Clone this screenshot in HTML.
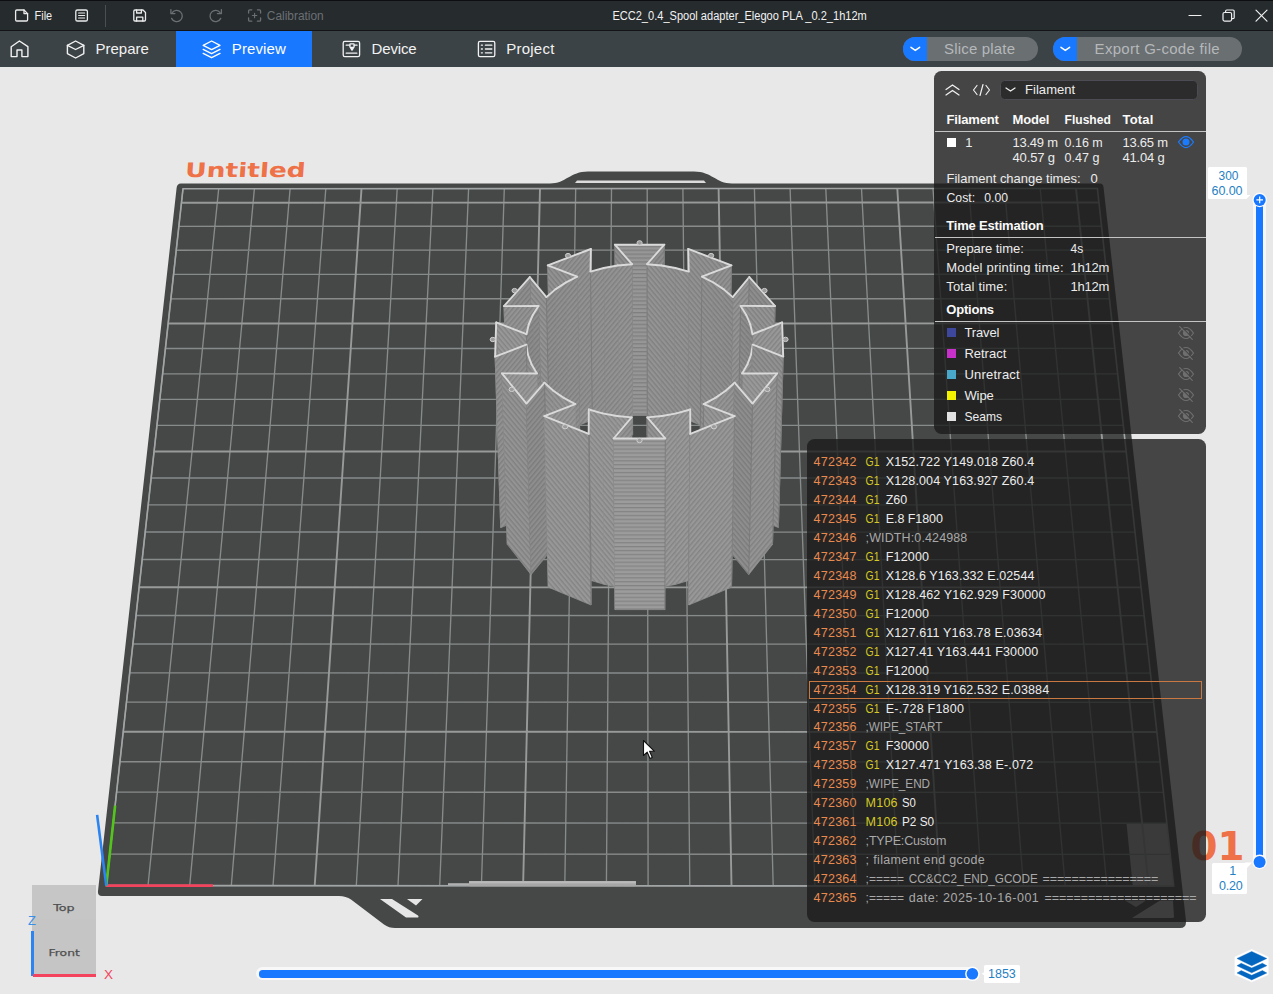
<!DOCTYPE html>
<html lang="en"><head><meta charset="utf-8"><title>ECC2_0.4_Spool adapter_Elegoo PLA _0.2_1h12m</title>
<style>
*{box-sizing:border-box;margin:0;padding:0}
html,body{width:1273px;height:994px;overflow:hidden;background:#e8e8e8;font-family:"Liberation Sans", "DejaVu Sans", sans-serif;}
#app{position:relative;width:1273px;height:994px;overflow:hidden;background:#e8e8e8}
.abs{position:absolute}
#titlebar{position:absolute;left:0;top:0;width:1273px;height:31px;background:#262b2e}
#tabbar{position:absolute;left:0;top:31px;width:1273px;height:36px;background:#3c4346}
#scene{position:absolute;left:0;top:0}
.panel{position:absolute;background:rgba(27,27,27,0.80);border-radius:7.5px}
.sep{position:absolute;width:271px;height:1px;background:#c4c4c4}
</style></head><body><div id="app">
<svg id="scene" width="1273" height="994" viewBox="0 0 1273 994">
<path d="M181,183.5 L550,183.5 C566,183.5 570,171.5 588,171.5 L694,171.5 C712,171.5 716,183.5 732,183.5 L1100,183.5 Q1103,183.5 1103.5,187 L1186,921 Q1186.5,928 1180,928 L395,928 Q389,928 384,924.5 L351,899.5 Q346,896 339,896 L102,896 Q97.5,896 98,891 L176.6,188 Q177,183.5 181,183.5 Z" fill="#464848"/>
<path d="M577,180.5 L704,180.5 L706,183 L575,183 Z" fill="#dcdcdc"/>
<polygon points="1132.8,885.9 1173.7,886 1166.8,823.2 1126.5,823.2" fill="#b4b4b4"/>
<path d="M106.3,885.6 L183,188.7 M106.3,885.6 L1173.7,886 M148,885.6 L218.7,188.6 M109.8,854 L1170.2,854.4 M189.7,885.6 L254.4,188.6 M113.2,822.9 L1166.8,823.2 M231.3,885.6 L290.1,188.6 M116.6,792.1 L1163.5,792.4 M273,885.7 L325.8,188.6 M120,761.7 L1160.1,762 M356.3,885.7 L397.2,188.6 M126.5,702.1 L1153.6,702.3 M398,885.7 L432.9,188.6 M129.7,672.9 L1150.4,673.1 M439.7,885.7 L468.6,188.6 M132.9,644 L1147.3,644.2 M481.4,885.7 L504.3,188.6 M136,615.5 L1144.1,615.6 M564.8,885.7 L575.7,188.6 M142.2,559.5 L1138,559.6 M606.4,885.8 L611.5,188.6 M145.2,532 L1135,532.1 M648.1,885.8 L647.2,188.6 M148.2,504.8 L1132,504.9 M689.8,885.8 L682.9,188.6 M151.1,478 L1129.1,478 M773.2,885.8 L754.4,188.6 M156.9,425.3 L1123.3,425.3 M814.9,885.8 L790.1,188.5 M159.8,399.4 L1120.5,399.4 M856.6,885.8 L825.8,188.5 M162.6,373.8 L1117.7,373.8 M898.4,885.9 L861.5,188.5 M165.4,348.5 L1114.9,348.4 M981.8,885.9 L933,188.5 M170.9,298.8 L1109.5,298.7 M1023.5,885.9 L968.8,188.5 M173.5,274.4 L1106.8,274.2 M1065.2,885.9 L1004.5,188.5 M176.2,250.2 L1104.2,250.1 M1106.9,885.9 L1040.2,188.5 M178.8,226.3 L1101.5,226.2" stroke="#878b8a" stroke-width="1.35" fill="none"/>
<path d="M314.7,885.7 L361.5,188.6 M123.2,731.7 L1156.9,732 M523.1,885.7 L540,188.6 M139.1,587.3 L1141.1,587.4 M731.5,885.8 L718.6,188.6 M154.1,451.5 L1126.2,451.5 M940.1,885.9 L897.3,188.5 M168.1,323.5 L1112.2,323.4 M1148.7,885.9 L1076,188.5 M181.4,202.7 L1099,202.5" stroke="#979a99" stroke-width="1.9" fill="none"/>
<path d="M106.3,885.6 L1173.7,886 L1097.4,188.5 L183,188.7 Z" stroke="#a2a5a5" stroke-width="1.6" fill="none"/>
<path d="M380,899 L392,899 L418,915.5 Q419.5,917.5 417,917.5 L406,917.5 Z" fill="#e6e6e6"/><path d="M407,899 L422.5,899 L416,905.5 Z" fill="#e6e6e6"/>
<path d="M1132,918 L1160,900.5 L1173,900.5 L1174,917 Q1174,918 1172,918 Z" fill="#c4c4c4"/><path d="M1125,900.5 L1146,900.5 L1136,907 Z" fill="#b5b5b5"/>
<rect x="448" y="883.2" width="22" height="2" fill="#b0b0b0"/><rect x="469" y="880.9" width="167" height="5.4" rx="1" fill="#a6a6a6"/><rect x="469" y="881.2" width="167" height="2.2" fill="#b9b9b9"/>
<line x1="106.3" y1="885.6" x2="213.0" y2="885.6" stroke="#f4435c" stroke-width="2.6"/>
<line x1="106.3" y1="885.6" x2="115.1" y2="805.6" stroke="#52c41a" stroke-width="2.6"/>
<line x1="106.3" y1="885.6" x2="97.1" y2="814.8" stroke="#2b84f0" stroke-width="2.6"/>
<defs><pattern id="pH" width="4" height="3.9" patternUnits="userSpaceOnUse"><rect width="4" height="3.9" fill="#fff" fill-opacity=".07"/><rect y="0" width="4" height="1.3" fill="#000" fill-opacity=".16"/></pattern><pattern id="pA" width="4" height="3.6" patternUnits="userSpaceOnUse" patternTransform="rotate(50)"><rect width="4" height="3.6" fill="#fff" fill-opacity=".05"/><rect width="4" height="1.4" fill="#000" fill-opacity=".13"/></pattern><pattern id="pB" width="4" height="3.6" patternUnits="userSpaceOnUse" patternTransform="rotate(-50)"><rect width="4" height="3.6" fill="#fff" fill-opacity=".05"/><rect width="4" height="1.4" fill="#000" fill-opacity=".13"/></pattern></defs>
<g stroke-linejoin="round">
<polygon points="614.9,244.7 664.3,244.7 663.8,415.4 616.2,415.4" fill="#8f8f8f" stroke="#8f8f8f" stroke-width="0.7"/>
<polygon points="614.9,244.7 664.3,244.7 663.8,415.4 616.2,415.4" fill="url(#pH)"/>
<path d="M614.9,244.7 L616.2,415.4" stroke="#757575" stroke-opacity=".75" stroke-width="0.9"/>
<path d="M614.9,244.7 L664.3,244.7" stroke="#dadada" stroke-width="1.9" stroke-linecap="round"/>
<ellipse cx="639.6" cy="242.9" rx="2.6" ry="2.2" fill="#9c9c9c" stroke="#cfcfcf" stroke-width="1"/>
<polygon points="632,264.2 614.9,244.7 616.2,415.4 632.6,435" fill="#888888" stroke="#888888" stroke-width="0.7"/>
<polygon points="632,264.2 614.9,244.7 616.2,415.4 632.6,435" fill="url(#pA)"/>
<path d="M632,264.2 L632.6,435" stroke="#757575" stroke-opacity=".75" stroke-width="0.9"/>
<path d="M632,264.2 L614.9,244.7" stroke="#dadada" stroke-width="1.9" stroke-linecap="round"/>
<polygon points="664.3,244.7 647.1,264.2 647.3,435 663.8,415.4" fill="#888888" stroke="#888888" stroke-width="0.7"/>
<polygon points="664.3,244.7 647.1,264.2 647.3,435 663.8,415.4" fill="url(#pB)"/>
<path d="M664.3,244.7 L663.8,415.4" stroke="#757575" stroke-opacity=".75" stroke-width="0.9"/>
<path d="M664.3,244.7 L647.1,264.2" stroke="#dadada" stroke-width="1.9" stroke-linecap="round"/>
<polygon points="547.8,265.4 590.9,249 593,419.7 551.4,436.2" fill="#8c8c8c" stroke="#8c8c8c" stroke-width="0.7"/>
<polygon points="547.8,265.4 590.9,249 593,419.7 551.4,436.2" fill="url(#pB)"/>
<path d="M547.8,265.4 L551.4,436.2" stroke="#757575" stroke-opacity=".75" stroke-width="0.9"/>
<path d="M547.8,265.4 L590.9,249" stroke="#dadada" stroke-width="1.9" stroke-linecap="round"/>
<ellipse cx="568" cy="255.6" rx="2.6" ry="2.2" fill="#9c9c9c" stroke="#cfcfcf" stroke-width="1"/>
<polygon points="688.2,248.9 731.4,265.4 728.5,436.2 686.9,419.7" fill="#8c8c8c" stroke="#8c8c8c" stroke-width="0.7"/>
<polygon points="688.2,248.9 731.4,265.4 728.5,436.2 686.9,419.7" fill="url(#pA)"/>
<path d="M688.2,248.9 L686.9,419.7" stroke="#757575" stroke-opacity=".75" stroke-width="0.9"/>
<path d="M688.2,248.9 L731.4,265.4" stroke="#dadada" stroke-width="1.9" stroke-linecap="round"/>
<ellipse cx="711.1" cy="255.6" rx="2.6" ry="2.2" fill="#9c9c9c" stroke="#cfcfcf" stroke-width="1"/>
<polygon points="590.9,249 590.5,271.6 592.6,442.4 593,419.7" fill="#8b8b8b" stroke="#8b8b8b" stroke-width="0.7"/>
<polygon points="590.9,249 590.5,271.6 592.6,442.4 593,419.7" fill="url(#pB)"/>
<path d="M590.9,249 L593,419.7" stroke="#757575" stroke-opacity=".75" stroke-width="0.9"/>
<path d="M590.9,249 L590.5,271.6" stroke="#dadada" stroke-width="1.9" stroke-linecap="round"/>
<polygon points="688.7,271.6 688.2,248.9 686.9,419.7 687.3,442.4" fill="#8b8b8b" stroke="#8b8b8b" stroke-width="0.7"/>
<polygon points="688.7,271.6 688.2,248.9 686.9,419.7 687.3,442.4" fill="url(#pA)"/>
<path d="M688.7,271.6 L687.3,442.4" stroke="#757575" stroke-opacity=".75" stroke-width="0.9"/>
<path d="M688.7,271.6 L688.2,248.9" stroke="#dadada" stroke-width="1.9" stroke-linecap="round"/>
<polygon points="617.7,265.5 632,264.2 632.6,435 618.9,436.3" fill="#8e8e8e" stroke="#8e8e8e" stroke-width="0.7"/>
<polygon points="617.7,265.5 632,264.2 632.6,435 618.9,436.3" fill="url(#pB)"/>
<path d="M617.7,265.5 L632,264.2" stroke="#dadada" stroke-width="1.9" stroke-linecap="round"/>
<polygon points="647.1,264.2 661.4,265.5 661,436.3 647.3,435" fill="#8e8e8e" stroke="#8e8e8e" stroke-width="0.7"/>
<polygon points="647.1,264.2 661.4,265.5 661,436.3 647.3,435" fill="url(#pA)"/>
<path d="M647.1,264.2 L647.3,435" stroke="#757575" stroke-opacity=".75" stroke-width="0.9"/>
<path d="M647.1,264.2 L661.4,265.5" stroke="#dadada" stroke-width="1.9" stroke-linecap="round"/>
<polygon points="603.8,268 617.7,265.5 618.9,436.3 605.5,438.7" fill="#8d8d8d" stroke="#8d8d8d" stroke-width="0.7"/>
<polygon points="603.8,268 617.7,265.5 618.9,436.3 605.5,438.7" fill="url(#pB)"/>
<path d="M603.8,268 L617.7,265.5" stroke="#dadada" stroke-width="1.9" stroke-linecap="round"/>
<polygon points="661.4,265.5 675.3,268 674.4,438.7 661,436.3" fill="#8d8d8d" stroke="#8d8d8d" stroke-width="0.7"/>
<polygon points="661.4,265.5 675.3,268 674.4,438.7 661,436.3" fill="url(#pA)"/>
<path d="M661.4,265.5 L675.3,268" stroke="#dadada" stroke-width="1.9" stroke-linecap="round"/>
<polygon points="590.5,271.6 603.8,268 605.5,438.7 592.6,442.4" fill="#8d8d8d" stroke="#8d8d8d" stroke-width="0.7"/>
<polygon points="590.5,271.6 603.8,268 605.5,438.7 592.6,442.4" fill="url(#pB)"/>
<path d="M590.5,271.6 L592.6,442.4" stroke="#757575" stroke-opacity=".75" stroke-width="0.9"/>
<path d="M590.5,271.6 L603.8,268" stroke="#dadada" stroke-width="1.9" stroke-linecap="round"/>
<polygon points="675.3,268 688.7,271.6 687.3,442.4 674.4,438.7" fill="#8d8d8d" stroke="#8d8d8d" stroke-width="0.7"/>
<polygon points="675.3,268 688.7,271.6 687.3,442.4 674.4,438.7" fill="url(#pA)"/>
<path d="M675.3,268 L688.7,271.6" stroke="#dadada" stroke-width="1.9" stroke-linecap="round"/>
<polygon points="577.2,276.7 547.8,265.4 551.4,436.2 579.9,447.5" fill="#8c8c8c" stroke="#8c8c8c" stroke-width="0.7"/>
<polygon points="577.2,276.7 547.8,265.4 551.4,436.2 579.9,447.5" fill="url(#pA)"/>
<path d="M577.2,276.7 L579.9,447.5" stroke="#757575" stroke-opacity=".75" stroke-width="0.9"/>
<path d="M577.2,276.7 L547.8,265.4" stroke="#dadada" stroke-width="1.9" stroke-linecap="round"/>
<polygon points="731.4,265.4 701.9,276.7 700.1,447.5 728.5,436.2" fill="#8c8c8c" stroke="#8c8c8c" stroke-width="0.7"/>
<polygon points="731.4,265.4 701.9,276.7 700.1,447.5 728.5,436.2" fill="url(#pB)"/>
<path d="M731.4,265.4 L728.5,436.2" stroke="#757575" stroke-opacity=".75" stroke-width="0.9"/>
<path d="M731.4,265.4 L701.9,276.7" stroke="#dadada" stroke-width="1.9" stroke-linecap="round"/>
<polygon points="565.7,282.6 577.2,276.7 579.9,447.5 568.7,453.4" fill="#8b8b8b" stroke="#8b8b8b" stroke-width="0.7"/>
<polygon points="565.7,282.6 577.2,276.7 579.9,447.5 568.7,453.4" fill="url(#pB)"/>
<path d="M565.7,282.6 L577.2,276.7" stroke="#dadada" stroke-width="1.9" stroke-linecap="round"/>
<polygon points="701.9,276.7 713.4,282.5 711.2,453.4 700.1,447.5" fill="#8b8b8b" stroke="#8b8b8b" stroke-width="0.7"/>
<polygon points="701.9,276.7 713.4,282.5 711.2,453.4 700.1,447.5" fill="url(#pA)"/>
<path d="M701.9,276.7 L700.1,447.5" stroke="#757575" stroke-opacity=".75" stroke-width="0.9"/>
<path d="M701.9,276.7 L713.4,282.5" stroke="#dadada" stroke-width="1.9" stroke-linecap="round"/>
<polygon points="555.4,289.4 565.7,282.6 568.7,453.4 558.8,460.2" fill="#8a8a8a" stroke="#8a8a8a" stroke-width="0.7"/>
<polygon points="555.4,289.4 565.7,282.6 568.7,453.4 558.8,460.2" fill="url(#pB)"/>
<path d="M555.4,289.4 L565.7,282.6" stroke="#dadada" stroke-width="1.9" stroke-linecap="round"/>
<polygon points="713.4,282.5 723.8,289.4 721.1,460.2 711.2,453.4" fill="#8a8a8a" stroke="#8a8a8a" stroke-width="0.7"/>
<polygon points="713.4,282.5 723.8,289.4 721.1,460.2 711.2,453.4" fill="url(#pA)"/>
<path d="M713.4,282.5 L723.8,289.4" stroke="#dadada" stroke-width="1.9" stroke-linecap="round"/>
<polygon points="529.8,277.1 546.4,297.1 550.1,467.9 534.2,447.9" fill="#8e8e8e" stroke="#8e8e8e" stroke-width="0.7"/>
<polygon points="529.8,277.1 546.4,297.1 550.1,467.9 534.2,447.9" fill="url(#pA)"/>
<path d="M529.8,277.1 L534.2,447.9" stroke="#757575" stroke-opacity=".75" stroke-width="0.9"/>
<path d="M529.8,277.1 L546.4,297.1" stroke="#dadada" stroke-width="1.9" stroke-linecap="round"/>
<polygon points="732.7,297.1 749.3,277.1 745.8,448 729.8,467.9" fill="#8e8e8e" stroke="#8e8e8e" stroke-width="0.7"/>
<polygon points="732.7,297.1 749.3,277.1 745.8,448 729.8,467.9" fill="url(#pB)"/>
<path d="M732.7,297.1 L729.8,467.9" stroke="#757575" stroke-opacity=".75" stroke-width="0.9"/>
<path d="M732.7,297.1 L749.3,277.1" stroke="#dadada" stroke-width="1.9" stroke-linecap="round"/>
<polygon points="504,306.1 529.8,277.1 534.2,447.9 509.3,477" fill="#888888" stroke="#888888" stroke-width="0.7"/>
<polygon points="504,306.1 529.8,277.1 534.2,447.9 509.3,477" fill="url(#pB)"/>
<path d="M504,306.1 L509.3,477" stroke="#757575" stroke-opacity=".75" stroke-width="0.9"/>
<path d="M504,306.1 L529.8,277.1" stroke="#dadada" stroke-width="1.9" stroke-linecap="round"/>
<ellipse cx="514.6" cy="290.6" rx="2.6" ry="2.2" fill="#9c9c9c" stroke="#cfcfcf" stroke-width="1"/>
<polygon points="749.3,277.1 775.1,306.1 770.6,477 745.8,448" fill="#888888" stroke="#888888" stroke-width="0.7"/>
<polygon points="749.3,277.1 775.1,306.1 770.6,477 745.8,448" fill="url(#pA)"/>
<path d="M749.3,277.1 L745.8,448" stroke="#757575" stroke-opacity=".75" stroke-width="0.9"/>
<path d="M749.3,277.1 L775.1,306.1" stroke="#dadada" stroke-width="1.9" stroke-linecap="round"/>
<ellipse cx="764.5" cy="290.6" rx="2.6" ry="2.2" fill="#9c9c9c" stroke="#cfcfcf" stroke-width="1"/>
<polygon points="546.4,297.1 555.4,289.4 558.8,460.2 550.1,467.9" fill="#898989" stroke="#898989" stroke-width="0.7"/>
<polygon points="546.4,297.1 555.4,289.4 558.8,460.2 550.1,467.9" fill="url(#pB)"/>
<path d="M546.4,297.1 L550.1,467.9" stroke="#757575" stroke-opacity=".75" stroke-width="0.9"/>
<path d="M546.4,297.1 L555.4,289.4" stroke="#dadada" stroke-width="1.9" stroke-linecap="round"/>
<polygon points="723.8,289.4 732.7,297.1 729.8,467.9 721.1,460.2" fill="#898989" stroke="#898989" stroke-width="0.7"/>
<polygon points="723.8,289.4 732.7,297.1 729.8,467.9 721.1,460.2" fill="url(#pA)"/>
<path d="M723.8,289.4 L732.7,297.1" stroke="#dadada" stroke-width="1.9" stroke-linecap="round"/>
<polygon points="538.5,306 504,306.1 509.3,477 542.5,476.8" fill="#8e8e8e" stroke="#8e8e8e" stroke-width="0.7"/>
<polygon points="538.5,306 504,306.1 509.3,477 542.5,476.8" fill="url(#pB)"/>
<path d="M538.5,306 L542.5,476.8" stroke="#757575" stroke-opacity=".75" stroke-width="0.9"/>
<path d="M538.5,306 L504,306.1" stroke="#dadada" stroke-width="1.9" stroke-linecap="round"/>
<polygon points="775.1,306.1 740.6,305.9 737.4,476.8 770.6,477" fill="#8e8e8e" stroke="#8e8e8e" stroke-width="0.7"/>
<polygon points="775.1,306.1 740.6,305.9 737.4,476.8 770.6,477" fill="url(#pA)"/>
<path d="M775.1,306.1 L770.6,477" stroke="#757575" stroke-opacity=".75" stroke-width="0.9"/>
<path d="M775.1,306.1 L740.6,305.9" stroke="#dadada" stroke-width="1.9" stroke-linecap="round"/>
<polygon points="532.8,315 538.5,306 542.5,476.8 537,485.9" fill="#878787" stroke="#878787" stroke-width="0.7"/>
<polygon points="532.8,315 538.5,306 542.5,476.8 537,485.9" fill="url(#pB)"/>
<path d="M532.8,315 L538.5,306" stroke="#dadada" stroke-width="1.9" stroke-linecap="round"/>
<polygon points="740.6,305.9 746.3,315 742.9,485.9 737.4,476.8" fill="#878787" stroke="#878787" stroke-width="0.7"/>
<polygon points="740.6,305.9 746.3,315 742.9,485.9 737.4,476.8" fill="url(#pA)"/>
<path d="M740.6,305.9 L737.4,476.8" stroke="#757575" stroke-opacity=".75" stroke-width="0.9"/>
<path d="M740.6,305.9 L746.3,315" stroke="#dadada" stroke-width="1.9" stroke-linecap="round"/>
<polygon points="528.7,324.5 532.8,315 537,485.9 533.1,495.4" fill="#868686" stroke="#868686" stroke-width="0.7"/>
<polygon points="528.7,324.5 532.8,315 537,485.9 533.1,495.4" fill="url(#pB)"/>
<path d="M528.7,324.5 L532.8,315" stroke="#dadada" stroke-width="1.9" stroke-linecap="round"/>
<polygon points="746.3,315 750.3,324.5 746.7,495.4 742.9,485.9" fill="#868686" stroke="#868686" stroke-width="0.7"/>
<polygon points="746.3,315 750.3,324.5 746.7,495.4 742.9,485.9" fill="url(#pA)"/>
<path d="M746.3,315 L750.3,324.5" stroke="#dadada" stroke-width="1.9" stroke-linecap="round"/>
<polygon points="496.2,322.4 526.5,334.2 531,505.2 501.8,493.3" fill="#929292" stroke="#929292" stroke-width="0.7"/>
<polygon points="496.2,322.4 526.5,334.2 531,505.2 501.8,493.3" fill="url(#pA)"/>
<path d="M496.2,322.4 L501.8,493.3" stroke="#757575" stroke-opacity=".75" stroke-width="0.9"/>
<path d="M496.2,322.4 L526.5,334.2" stroke="#dadada" stroke-width="1.9" stroke-linecap="round"/>
<polygon points="752.5,334.2 782.1,322.4 777.4,493.4 748.8,505.2" fill="#929292" stroke="#929292" stroke-width="0.7"/>
<polygon points="752.5,334.2 782.1,322.4 777.4,493.4 748.8,505.2" fill="url(#pB)"/>
<path d="M752.5,334.2 L748.8,505.2" stroke="#757575" stroke-opacity=".75" stroke-width="0.9"/>
<path d="M752.5,334.2 L782.1,322.4" stroke="#dadada" stroke-width="1.9" stroke-linecap="round"/>
<polygon points="526.5,334.2 528.7,324.5 533.1,495.4 531,505.2" fill="#858585" stroke="#858585" stroke-width="0.7"/>
<polygon points="526.5,334.2 528.7,324.5 533.1,495.4 531,505.2" fill="url(#pB)"/>
<path d="M526.5,334.2 L531,505.2" stroke="#757575" stroke-opacity=".75" stroke-width="0.9"/>
<path d="M526.5,334.2 L528.7,324.5" stroke="#dadada" stroke-width="1.9" stroke-linecap="round"/>
<polygon points="750.3,324.5 752.5,334.2 748.8,505.2 746.7,495.4" fill="#858585" stroke="#858585" stroke-width="0.7"/>
<polygon points="750.3,324.5 752.5,334.2 748.8,505.2 746.7,495.4" fill="url(#pA)"/>
<path d="M750.3,324.5 L752.5,334.2" stroke="#dadada" stroke-width="1.9" stroke-linecap="round"/>
<polygon points="495.1,356.7 496.2,322.4 501.8,493.3 500.7,527.7" fill="#8b8b8b" stroke="#8b8b8b" stroke-width="0.7"/>
<polygon points="495.1,356.7 496.2,322.4 501.8,493.3 500.7,527.7" fill="url(#pB)"/>
<path d="M495.1,356.7 L500.7,527.7" stroke="#757575" stroke-opacity=".75" stroke-width="0.9"/>
<path d="M495.1,356.7 L496.2,322.4" stroke="#dadada" stroke-width="1.9" stroke-linecap="round"/>
<ellipse cx="492.8" cy="339.5" rx="2.6" ry="2.2" fill="#9c9c9c" stroke="#cfcfcf" stroke-width="1"/>
<polygon points="782.1,322.4 783.2,356.6 778.4,527.6 777.4,493.4" fill="#8b8b8b" stroke="#8b8b8b" stroke-width="0.7"/>
<polygon points="782.1,322.4 783.2,356.6 778.4,527.6 777.4,493.4" fill="url(#pB)"/>
<path d="M782.1,322.4 L777.4,493.4" stroke="#757575" stroke-opacity=".75" stroke-width="0.9"/>
<path d="M782.1,322.4 L783.2,356.6" stroke="#dadada" stroke-width="1.9" stroke-linecap="round"/>
<ellipse cx="785.5" cy="339.4" rx="2.6" ry="2.2" fill="#9c9c9c" stroke="#cfcfcf" stroke-width="1"/>
<polygon points="527.9,354.5 526.3,344.7 530.8,515.6 532.4,525.5" fill="#8b8b8b" stroke="#8b8b8b" stroke-width="0.7"/>
<polygon points="527.9,354.5 526.3,344.7 530.8,515.6 532.4,525.5" fill="url(#pA)"/>
<path d="M527.9,354.5 L526.3,344.7" stroke="#dadada" stroke-width="1.9" stroke-linecap="round"/>
<polygon points="752.8,344.7 751.1,354.5 747.5,525.5 749.1,515.7" fill="#8b8b8b" stroke="#8b8b8b" stroke-width="0.7"/>
<polygon points="752.8,344.7 751.1,354.5 747.5,525.5 749.1,515.7" fill="url(#pB)"/>
<path d="M752.8,344.7 L749.1,515.7" stroke="#757575" stroke-opacity=".75" stroke-width="0.9"/>
<path d="M752.8,344.7 L751.1,354.5" stroke="#dadada" stroke-width="1.9" stroke-linecap="round"/>
<polygon points="526.3,344.7 495.1,356.7 500.7,527.7 530.8,515.6" fill="#8c8c8c" stroke="#8c8c8c" stroke-width="0.7"/>
<polygon points="526.3,344.7 495.1,356.7 500.7,527.7 530.8,515.6" fill="url(#pB)"/>
<path d="M526.3,344.7 L530.8,515.6" stroke="#757575" stroke-opacity=".75" stroke-width="0.9"/>
<path d="M526.3,344.7 L495.1,356.7" stroke="#dadada" stroke-width="1.9" stroke-linecap="round"/>
<polygon points="783.2,356.6 752.8,344.7 749.1,515.7 778.4,527.6" fill="#8c8c8c" stroke="#8c8c8c" stroke-width="0.7"/>
<polygon points="783.2,356.6 752.8,344.7 749.1,515.7 778.4,527.6" fill="url(#pA)"/>
<path d="M783.2,356.6 L778.4,527.6" stroke="#757575" stroke-opacity=".75" stroke-width="0.9"/>
<path d="M783.2,356.6 L752.8,344.7" stroke="#dadada" stroke-width="1.9" stroke-linecap="round"/>
<polygon points="531.5,364.2 527.9,354.5 532.4,525.5 535.8,535.2" fill="#8c8c8c" stroke="#8c8c8c" stroke-width="0.7"/>
<polygon points="531.5,364.2 527.9,354.5 532.4,525.5 535.8,535.2" fill="url(#pA)"/>
<path d="M531.5,364.2 L527.9,354.5" stroke="#dadada" stroke-width="1.9" stroke-linecap="round"/>
<polygon points="751.1,354.5 747.5,364.2 744,535.2 747.5,525.5" fill="#8c8c8c" stroke="#8c8c8c" stroke-width="0.7"/>
<polygon points="751.1,354.5 747.5,364.2 744,535.2 747.5,525.5" fill="url(#pB)"/>
<path d="M751.1,354.5 L747.5,364.2" stroke="#dadada" stroke-width="1.9" stroke-linecap="round"/>
<polygon points="536.9,373.5 531.5,364.2 535.8,535.2 541,544.5" fill="#8d8d8d" stroke="#8d8d8d" stroke-width="0.7"/>
<polygon points="536.9,373.5 531.5,364.2 535.8,535.2 541,544.5" fill="url(#pA)"/>
<path d="M536.9,373.5 L541,544.5" stroke="#757575" stroke-opacity=".75" stroke-width="0.9"/>
<path d="M536.9,373.5 L531.5,364.2" stroke="#dadada" stroke-width="1.9" stroke-linecap="round"/>
<polygon points="747.5,364.2 742.1,373.5 738.8,544.5 744,535.2" fill="#8d8d8d" stroke="#8d8d8d" stroke-width="0.7"/>
<polygon points="747.5,364.2 742.1,373.5 738.8,544.5 744,535.2" fill="url(#pB)"/>
<path d="M747.5,364.2 L742.1,373.5" stroke="#dadada" stroke-width="1.9" stroke-linecap="round"/>
<polygon points="501.9,373.4 536.9,373.5 541,544.5 507.3,544.4" fill="#949494" stroke="#949494" stroke-width="0.7"/>
<polygon points="501.9,373.4 536.9,373.5 541,544.5 507.3,544.4" fill="url(#pB)"/>
<path d="M501.9,373.4 L507.3,544.4" stroke="#757575" stroke-opacity=".75" stroke-width="0.9"/>
<path d="M501.9,373.4 L536.9,373.5" stroke="#dadada" stroke-width="1.9" stroke-linecap="round"/>
<polygon points="742.1,373.5 777.2,373.4 772.5,544.4 738.8,544.5" fill="#949494" stroke="#949494" stroke-width="0.7"/>
<polygon points="742.1,373.5 777.2,373.4 772.5,544.4 738.8,544.5" fill="url(#pA)"/>
<path d="M742.1,373.5 L738.8,544.5" stroke="#757575" stroke-opacity=".75" stroke-width="0.9"/>
<path d="M742.1,373.5 L777.2,373.4" stroke="#dadada" stroke-width="1.9" stroke-linecap="round"/>
<polygon points="553.3,390.7 544.5,382.7 548.3,553.7 556.9,561.7" fill="#8f8f8f" stroke="#8f8f8f" stroke-width="0.7"/>
<polygon points="553.3,390.7 544.5,382.7 548.3,553.7 556.9,561.7" fill="url(#pA)"/>
<path d="M553.3,390.7 L544.5,382.7" stroke="#dadada" stroke-width="1.9" stroke-linecap="round"/>
<polygon points="734.6,382.7 725.7,390.7 723,561.8 731.5,553.7" fill="#8f8f8f" stroke="#8f8f8f" stroke-width="0.7"/>
<polygon points="734.6,382.7 725.7,390.7 723,561.8 731.5,553.7" fill="url(#pB)"/>
<path d="M734.6,382.7 L731.5,553.7" stroke="#757575" stroke-opacity=".75" stroke-width="0.9"/>
<path d="M734.6,382.7 L725.7,390.7" stroke="#dadada" stroke-width="1.9" stroke-linecap="round"/>
<polygon points="526.5,403.6 501.9,373.4 507.3,544.4 531.1,574.7" fill="#8e8e8e" stroke="#8e8e8e" stroke-width="0.7"/>
<polygon points="526.5,403.6 501.9,373.4 507.3,544.4 531.1,574.7" fill="url(#pA)"/>
<path d="M526.5,403.6 L531.1,574.7" stroke="#757575" stroke-opacity=".75" stroke-width="0.9"/>
<path d="M526.5,403.6 L501.9,373.4" stroke="#dadada" stroke-width="1.9" stroke-linecap="round"/>
<ellipse cx="511.7" cy="389.4" rx="2.6" ry="2.2" fill="#9c9c9c" stroke="#cfcfcf" stroke-width="1"/>
<polygon points="777.2,373.4 752.5,403.6 748.7,574.7 772.5,544.4" fill="#8e8e8e" stroke="#8e8e8e" stroke-width="0.7"/>
<polygon points="777.2,373.4 752.5,403.6 748.7,574.7 772.5,544.4" fill="url(#pB)"/>
<path d="M777.2,373.4 L772.5,544.4" stroke="#757575" stroke-opacity=".75" stroke-width="0.9"/>
<path d="M777.2,373.4 L752.5,403.6" stroke="#dadada" stroke-width="1.9" stroke-linecap="round"/>
<ellipse cx="767.3" cy="389.4" rx="2.6" ry="2.2" fill="#9c9c9c" stroke="#cfcfcf" stroke-width="1"/>
<polygon points="544.5,382.7 526.5,403.6 531.1,574.7 548.3,553.7" fill="#888888" stroke="#888888" stroke-width="0.7"/>
<polygon points="544.5,382.7 526.5,403.6 531.1,574.7 548.3,553.7" fill="url(#pB)"/>
<path d="M544.5,382.7 L548.3,553.7" stroke="#757575" stroke-opacity=".75" stroke-width="0.9"/>
<path d="M544.5,382.7 L526.5,403.6" stroke="#dadada" stroke-width="1.9" stroke-linecap="round"/>
<polygon points="752.5,403.6 734.6,382.7 731.5,553.7 748.7,574.7" fill="#888888" stroke="#888888" stroke-width="0.7"/>
<polygon points="752.5,403.6 734.6,382.7 731.5,553.7 748.7,574.7" fill="url(#pA)"/>
<path d="M752.5,403.6 L748.7,574.7" stroke="#757575" stroke-opacity=".75" stroke-width="0.9"/>
<path d="M752.5,403.6 L734.6,382.7" stroke="#dadada" stroke-width="1.9" stroke-linecap="round"/>
<polygon points="563.7,397.9 553.3,390.7 556.9,561.7 566.9,568.9" fill="#909090" stroke="#909090" stroke-width="0.7"/>
<polygon points="563.7,397.9 553.3,390.7 556.9,561.7 566.9,568.9" fill="url(#pA)"/>
<path d="M563.7,397.9 L553.3,390.7" stroke="#dadada" stroke-width="1.9" stroke-linecap="round"/>
<polygon points="725.7,390.7 715.4,397.9 713,568.9 723,561.8" fill="#909090" stroke="#909090" stroke-width="0.7"/>
<polygon points="725.7,390.7 715.4,397.9 713,568.9 723,561.8" fill="url(#pB)"/>
<path d="M725.7,390.7 L715.4,397.9" stroke="#dadada" stroke-width="1.9" stroke-linecap="round"/>
<polygon points="575.3,404.1 563.7,397.9 566.9,568.9 578.1,575.1" fill="#919191" stroke="#919191" stroke-width="0.7"/>
<polygon points="575.3,404.1 563.7,397.9 566.9,568.9 578.1,575.1" fill="url(#pA)"/>
<path d="M575.3,404.1 L578.1,575.1" stroke="#757575" stroke-opacity=".75" stroke-width="0.9"/>
<path d="M575.3,404.1 L563.7,397.9" stroke="#dadada" stroke-width="1.9" stroke-linecap="round"/>
<polygon points="715.4,397.9 703.7,404.1 701.7,575.2 713,568.9" fill="#919191" stroke="#919191" stroke-width="0.7"/>
<polygon points="715.4,397.9 703.7,404.1 701.7,575.2 713,568.9" fill="url(#pB)"/>
<path d="M715.4,397.9 L703.7,404.1" stroke="#dadada" stroke-width="1.9" stroke-linecap="round"/>
<polygon points="544.4,416.1 575.3,404.1 578.1,575.1 548.3,587.2" fill="#929292" stroke="#929292" stroke-width="0.7"/>
<polygon points="544.4,416.1 575.3,404.1 578.1,575.1 548.3,587.2" fill="url(#pB)"/>
<path d="M544.4,416.1 L548.3,587.2" stroke="#757575" stroke-opacity=".75" stroke-width="0.9"/>
<path d="M544.4,416.1 L575.3,404.1" stroke="#dadada" stroke-width="1.9" stroke-linecap="round"/>
<polygon points="703.7,404.1 734.6,416.1 731.5,587.2 701.7,575.2" fill="#929292" stroke="#929292" stroke-width="0.7"/>
<polygon points="703.7,404.1 734.6,416.1 731.5,587.2 701.7,575.2" fill="url(#pA)"/>
<path d="M703.7,404.1 L701.7,575.2" stroke="#757575" stroke-opacity=".75" stroke-width="0.9"/>
<path d="M703.7,404.1 L734.6,416.1" stroke="#dadada" stroke-width="1.9" stroke-linecap="round"/>
<polygon points="602.5,413.4 588.8,409.5 591.1,580.5 604.3,584.4" fill="#939393" stroke="#939393" stroke-width="0.7"/>
<polygon points="602.5,413.4 588.8,409.5 591.1,580.5 604.3,584.4" fill="url(#pA)"/>
<path d="M602.5,413.4 L588.8,409.5" stroke="#dadada" stroke-width="1.9" stroke-linecap="round"/>
<polygon points="690.2,409.5 676.5,413.4 675.5,584.4 688.7,580.5" fill="#939393" stroke="#939393" stroke-width="0.7"/>
<polygon points="690.2,409.5 676.5,413.4 675.5,584.4 688.7,580.5" fill="url(#pB)"/>
<path d="M690.2,409.5 L688.7,580.5" stroke="#757575" stroke-opacity=".75" stroke-width="0.9"/>
<path d="M690.2,409.5 L676.5,413.4" stroke="#dadada" stroke-width="1.9" stroke-linecap="round"/>
<polygon points="616.9,416 602.5,413.4 604.3,584.4 618.1,587.1" fill="#939393" stroke="#939393" stroke-width="0.7"/>
<polygon points="616.9,416 602.5,413.4 604.3,584.4 618.1,587.1" fill="url(#pA)"/>
<path d="M616.9,416 L602.5,413.4" stroke="#dadada" stroke-width="1.9" stroke-linecap="round"/>
<polygon points="676.5,413.4 662.1,416 661.7,587.1 675.5,584.4" fill="#939393" stroke="#939393" stroke-width="0.7"/>
<polygon points="676.5,413.4 662.1,416 661.7,587.1 675.5,584.4" fill="url(#pB)"/>
<path d="M676.5,413.4 L662.1,416" stroke="#dadada" stroke-width="1.9" stroke-linecap="round"/>
<polygon points="631.6,417.4 616.9,416 618.1,587.1 632.3,588.5" fill="#949494" stroke="#949494" stroke-width="0.7"/>
<polygon points="631.6,417.4 616.9,416 618.1,587.1 632.3,588.5" fill="url(#pA)"/>
<path d="M631.6,417.4 L632.3,588.5" stroke="#757575" stroke-opacity=".75" stroke-width="0.9"/>
<path d="M631.6,417.4 L616.9,416" stroke="#dadada" stroke-width="1.9" stroke-linecap="round"/>
<polygon points="662.1,416 647.3,417.4 647.5,588.5 661.7,587.1" fill="#949494" stroke="#949494" stroke-width="0.7"/>
<polygon points="662.1,416 647.3,417.4 647.5,588.5 661.7,587.1" fill="url(#pB)"/>
<path d="M662.1,416 L647.3,417.4" stroke="#dadada" stroke-width="1.9" stroke-linecap="round"/>
<polygon points="588.8,409.5 588.7,433.9 591,605 591.1,580.5" fill="#8b8b8b" stroke="#8b8b8b" stroke-width="0.7"/>
<polygon points="588.8,409.5 588.7,433.9 591,605 591.1,580.5" fill="url(#pA)"/>
<path d="M588.8,409.5 L591.1,580.5" stroke="#757575" stroke-opacity=".75" stroke-width="0.9"/>
<path d="M588.8,409.5 L588.7,433.9" stroke="#dadada" stroke-width="1.9" stroke-linecap="round"/>
<polygon points="690.3,433.9 690.2,409.5 688.7,580.5 688.8,605" fill="#8b8b8b" stroke="#8b8b8b" stroke-width="0.7"/>
<polygon points="690.3,433.9 690.2,409.5 688.7,580.5 688.8,605" fill="url(#pB)"/>
<path d="M690.3,433.9 L688.8,605" stroke="#757575" stroke-opacity=".75" stroke-width="0.9"/>
<path d="M690.3,433.9 L690.2,409.5" stroke="#dadada" stroke-width="1.9" stroke-linecap="round"/>
<polygon points="588.7,433.9 544.4,416.1 548.3,587.2 591,605" fill="#929292" stroke="#929292" stroke-width="0.7"/>
<polygon points="588.7,433.9 544.4,416.1 548.3,587.2 591,605" fill="url(#pA)"/>
<path d="M588.7,433.9 L591,605" stroke="#757575" stroke-opacity=".75" stroke-width="0.9"/>
<path d="M588.7,433.9 L544.4,416.1" stroke="#dadada" stroke-width="1.9" stroke-linecap="round"/>
<ellipse cx="565.1" cy="426.7" rx="2.6" ry="2.2" fill="#9c9c9c" stroke="#cfcfcf" stroke-width="1"/>
<polygon points="734.6,416.1 690.3,433.9 688.8,605 731.5,587.2" fill="#929292" stroke="#929292" stroke-width="0.7"/>
<polygon points="734.6,416.1 690.3,433.9 688.8,605 731.5,587.2" fill="url(#pB)"/>
<path d="M734.6,416.1 L731.5,587.2" stroke="#757575" stroke-opacity=".75" stroke-width="0.9"/>
<path d="M734.6,416.1 L690.3,433.9" stroke="#dadada" stroke-width="1.9" stroke-linecap="round"/>
<ellipse cx="713.9" cy="426.7" rx="2.6" ry="2.2" fill="#9c9c9c" stroke="#cfcfcf" stroke-width="1"/>
<polygon points="613.7,438.5 631.6,417.4 632.3,588.5 615,609.6" fill="#8e8e8e" stroke="#8e8e8e" stroke-width="0.7"/>
<polygon points="613.7,438.5 631.6,417.4 632.3,588.5 615,609.6" fill="url(#pB)"/>
<path d="M613.7,438.5 L615,609.6" stroke="#757575" stroke-opacity=".75" stroke-width="0.9"/>
<path d="M613.7,438.5 L631.6,417.4" stroke="#dadada" stroke-width="1.9" stroke-linecap="round"/>
<polygon points="647.3,417.4 665.3,438.5 664.8,609.6 647.5,588.5" fill="#8e8e8e" stroke="#8e8e8e" stroke-width="0.7"/>
<polygon points="647.3,417.4 665.3,438.5 664.8,609.6 647.5,588.5" fill="url(#pA)"/>
<path d="M647.3,417.4 L647.5,588.5" stroke="#757575" stroke-opacity=".75" stroke-width="0.9"/>
<path d="M647.3,417.4 L665.3,438.5" stroke="#dadada" stroke-width="1.9" stroke-linecap="round"/>
<polygon points="665.3,438.5 613.7,438.5 615,609.6 664.8,609.6" fill="#959595" stroke="#959595" stroke-width="0.7"/>
<polygon points="665.3,438.5 613.7,438.5 615,609.6 664.8,609.6" fill="url(#pH)"/>
<path d="M665.3,438.5 L664.8,609.6" stroke="#757575" stroke-opacity=".75" stroke-width="0.9"/>
<path d="M665.3,438.5 L613.7,438.5" stroke="#dadada" stroke-width="1.9" stroke-linecap="round"/>
<ellipse cx="639.5" cy="440.5" rx="2.6" ry="2.2" fill="#9c9c9c" stroke="#cfcfcf" stroke-width="1"/>
</g>
<text x="184.8" y="177" transform="translate(184.8,177) skewX(-4) translate(-184.8,-177)" font-family='"DejaVu Sans", sans-serif' font-weight="bold" font-size="19.9" fill="#ee7147" textLength="120.5" lengthAdjust="spacingAndGlyphs">Untitled</text>
<text x="1190.5" y="859.8" font-family='"DejaVu Sans", sans-serif' font-weight="bold" font-size="38.4" fill="#ee7147" textLength="54" lengthAdjust="spacingAndGlyphs">01</text>
</svg>
<div id="titlebar"></div>
<div class="abs" style="left:0;top:0;width:1273px;height:1px;background:#0d0e0f"></div>
<div class="abs" style="left:0;top:30px;width:1273px;height:1px;background:#121415"></div>
<div class="abs" style="left:105px;top:4.5px;width:1px;height:22px;background:#4a4f52"></div>
<svg class="abs" style="left:0;top:0" width="1273" height="31" viewBox="0 0 1273 31" fill="none" stroke-width="1.3" stroke-linejoin="round" stroke-linecap="round">
<g stroke="#ebebeb"><path d="M15.6,11.2 Q15.6,10 16.8,10 L24,10 L27.6,13.6 L27.6,19.8 Q27.6,21 26.4,21 L16.8,21 Q15.6,21 15.6,19.8 Z"/><path d="M24,10 L24,13.6 L27.6,13.6"/>
<rect x="75.8" y="10" width="11.6" height="11" rx="1.6"/><path d="M78.6,13 H84.6 M78.6,15.5 H84.6 M78.6,18 H84.6" stroke-width="1.2"/>
<path d="M135,10 H143 L145.5,12.5 V19.8 Q145.5,21 144.3,21 H135 Q133.8,21 133.8,19.8 V11.2 Q133.8,10 135,10 Z"/><path d="M136.6,10 V13 H141.4 V10"/><path d="M136.6,21 V17.2 H142.8 V21"/></g>
<g stroke="#6b7074"><path d="M172.2,12.6 A5.6,5.6 0 1 1 171.6,18.4"/><path d="M170.9,9.6 V13.6 H174.9"/>
<path d="M220.1,12.6 A5.6,5.6 0 1 0 220.7,18.4"/><path d="M221.4,9.6 V13.6 H217.4"/>
<path d="M248.6,13 V11 Q248.6,9.8 249.8,9.8 H251.8 M257.4,9.8 H259.4 Q260.6,9.8 260.6,11 V13 M260.6,18 V20 Q260.6,21.2 259.4,21.2 H257.4 M251.8,21.2 H249.8 Q248.6,21.2 248.6,20 V18"/><path d="M254.6,13.3 V17.7 M252.4,15.5 H256.8" stroke-width="1.1"/></g>
<g stroke="#f0f0f0" stroke-width="1.2"><path d="M1189,15.5 H1201"/><rect x="1223" y="12.5" width="8.6" height="8.6" rx="1.5"/><path d="M1225.6,12.5 V11.2 Q1225.6,10 1226.8,10 H1233 Q1234.2,10 1234.2,11.2 V17.4 Q1234.2,18.6 1233,18.6 H1231.6"/><path d="M1256,10.2 L1267,21.2 M1267,10.2 L1256,21.2"/></g>
</svg>



<div id="tabbar"></div>
<div class="abs" style="left:176px;top:31px;width:136px;height:36px;background:#1878ff"></div>
<div class="abs" style="left:903px;top:37px;width:135px;height:24px;border-radius:12px;background:#6a6f72;overflow:hidden"><div class="abs" style="left:0;top:0;width:24px;height:24px;background:#1878ff"></div></div>
<div class="abs" style="left:1053px;top:37px;width:189px;height:24px;border-radius:12px;background:#6a6f72;overflow:hidden"><div class="abs" style="left:0;top:0;width:24px;height:24px;background:#1878ff"></div></div>
<svg class="abs" style="left:0;top:0" width="1273" height="70" viewBox="0 0 1273 70" fill="none" stroke="#f2f2f2" stroke-width="1.4" stroke-linejoin="round" stroke-linecap="round">
<path d="M19.4,41 L27.9,46.7 V56.6 H21.9 V50 H17 V56.6 H11.2 V46.7 Z"/>
<path d="M75.6,41 L83.8,45.3 V53.6 L75.6,58 L67.4,53.6 V45.3 Z"/><path d="M67.4,45.3 L75.6,49.5 L83.8,45.3"/>
<g stroke="#fff"><path d="M211.6,41 L220,45.3 L211.6,49.6 L203.2,45.3 Z"/><path d="M203.2,49.4 L211.6,53.7 L220,49.4"/><path d="M203.2,53.4 L211.6,57.7 L220,53.4"/></g>
<g stroke-width="1.3"><rect x="343.2" y="41.4" width="16.4" height="15.2" rx="1.6"/><path d="M346.2,53.2 H356.8"/><path d="M346.2,45.2 H349.8 M354.2,45.2 H357"/><rect x="349.9" y="43.8" width="4.2" height="3.6" rx="0.6"/><path d="M350.6,47.8 L352,50.2 L353.4,47.8" fill="#f2f2f2"/></g>
<g stroke-width="1.3"><rect x="478.4" y="41.4" width="16.4" height="15.2" rx="1.6"/><path d="M481.4,45.2 H482.4 M485.4,45.2 H491.8 M481.4,49 H482.4 M485.4,49 H491.8 M481.4,52.8 H482.4 M485.4,52.8 H491.8"/></g>
<g stroke="#fff" stroke-width="1.5"><path d="M911,47.3 L915.3,50.4 L919.6,47.3"/><path d="M1061,47.3 L1065.3,50.4 L1069.6,47.3"/></g>
</svg>






<div class="panel" style="left:934px;top:71px;width:272px;height:362.5px"></div>
<svg class="abs" style="left:944px;top:82px" width="17" height="16" viewBox="0 0 17 16" fill="none" stroke="#f0f0f0" stroke-width="1.3" stroke-linecap="round" stroke-linejoin="round"><path d="M2,7.5 L8.5,3 L15,7.5"/><path d="M2,13 L8.5,8.5 L15,13"/></svg>
<svg class="abs" style="left:972px;top:82px" width="19" height="16" viewBox="0 0 19 16" fill="none" stroke="#f0f0f0" stroke-width="1.2" stroke-linecap="round" stroke-linejoin="round"><path d="M5,3.5 L1.5,8 L5,12.5"/><path d="M14,3.5 L17.5,8 L14,12.5"/><path d="M11,2.5 L8,13.5"/></svg>
<div class="abs" style="left:1000px;top:79.5px;width:198px;height:20px;background:#2c2c2c;border:1px solid #4c4c54;border-radius:4.5px"></div>
<svg class="abs" style="left:1004px;top:85px" width="13" height="9" viewBox="0 0 13 9" fill="none" stroke="#f0f0f0" stroke-width="1.3" stroke-linecap="round" stroke-linejoin="round"><path d="M2,3 L6.5,6 L11,3"/></svg>





<div class="sep" style="left:935px;top:131px"></div>
<div class="abs" style="left:947px;top:137.6px;width:9px;height:9px;background:#fff"></div>







<svg class="abs" style="left:1176.5px;top:134.4px" width="18" height="16" viewBox="0 0 18 16" fill="none" stroke="#1a7bff" stroke-width="1.25"><path d="M1.5,8 Q9,-3 16.5,8 Q9,19 1.5,8 Z"/><circle cx="9" cy="8" r="3.5" fill="#1a7bff" stroke="none"/></svg>





<div class="sep" style="left:935px;top:237px"></div>







<div class="sep" style="left:935px;top:321px"></div>
<div class="abs" style="left:947px;top:328.0px;width:9px;height:9px;background:#3d479c"></div>

<svg class="abs" style="left:1176.5px;top:324.5px" width="18" height="16" viewBox="0 0 18 16" fill="none" stroke="#6f6f6f" stroke-width="1.2" stroke-linecap="round"><path d="M1.5,8 Q9,-3 16.5,8 Q9,19 1.5,8 Z"/><circle cx="9" cy="8" r="3.1" fill="#6f6f6f" stroke="none"/><path d="M3.5,0.9 L16.3,13.7" stroke="#444" stroke-width="1.1"/><path d="M2.7,1.7 L15.3,14.3"/></svg>
<div class="abs" style="left:947px;top:348.9px;width:9px;height:9px;background:#c730c9"></div>

<svg class="abs" style="left:1176.5px;top:345.4px" width="18" height="16" viewBox="0 0 18 16" fill="none" stroke="#6f6f6f" stroke-width="1.2" stroke-linecap="round"><path d="M1.5,8 Q9,-3 16.5,8 Q9,19 1.5,8 Z"/><circle cx="9" cy="8" r="3.1" fill="#6f6f6f" stroke="none"/><path d="M3.5,0.9 L16.3,13.7" stroke="#444" stroke-width="1.1"/><path d="M2.7,1.7 L15.3,14.3"/></svg>
<div class="abs" style="left:947px;top:369.9px;width:9px;height:9px;background:#49a7c9"></div>

<svg class="abs" style="left:1176.5px;top:366.4px" width="18" height="16" viewBox="0 0 18 16" fill="none" stroke="#6f6f6f" stroke-width="1.2" stroke-linecap="round"><path d="M1.5,8 Q9,-3 16.5,8 Q9,19 1.5,8 Z"/><circle cx="9" cy="8" r="3.1" fill="#6f6f6f" stroke="none"/><path d="M3.5,0.9 L16.3,13.7" stroke="#444" stroke-width="1.1"/><path d="M2.7,1.7 L15.3,14.3"/></svg>
<div class="abs" style="left:947px;top:390.9px;width:9px;height:9px;background:#f2f200"></div>

<svg class="abs" style="left:1176.5px;top:387.4px" width="18" height="16" viewBox="0 0 18 16" fill="none" stroke="#6f6f6f" stroke-width="1.2" stroke-linecap="round"><path d="M1.5,8 Q9,-3 16.5,8 Q9,19 1.5,8 Z"/><circle cx="9" cy="8" r="3.1" fill="#6f6f6f" stroke="none"/><path d="M3.5,0.9 L16.3,13.7" stroke="#444" stroke-width="1.1"/><path d="M2.7,1.7 L15.3,14.3"/></svg>
<div class="abs" style="left:947px;top:411.8px;width:9px;height:9px;background:#e2e2e2"></div>

<svg class="abs" style="left:1176.5px;top:408.3px" width="18" height="16" viewBox="0 0 18 16" fill="none" stroke="#6f6f6f" stroke-width="1.2" stroke-linecap="round"><path d="M1.5,8 Q9,-3 16.5,8 Q9,19 1.5,8 Z"/><circle cx="9" cy="8" r="3.1" fill="#6f6f6f" stroke="none"/><path d="M3.5,0.9 L16.3,13.7" stroke="#444" stroke-width="1.1"/><path d="M2.7,1.7 L15.3,14.3"/></svg>
<div class="panel" style="left:807px;top:438.5px;width:399px;height:483px"></div>





































































<div class="abs" style="left:809px;top:680.5px;width:393px;height:18px;border:1px solid #c87840"></div>
<div class="abs" style="left:1253.4px;top:195px;width:12.6px;height:671px;background:#f7f7f7;border-radius:6.3px"></div>
<div class="abs" style="left:1256.2px;top:198px;width:6.9px;height:664px;background:#1878ff;border-radius:3px"></div>
<svg class="abs" style="left:1250px;top:190px" width="20" height="20" viewBox="0 0 20 20"><circle cx="9.7" cy="9.9" r="7.3" fill="#fbfbfb"/><circle cx="9.7" cy="9.9" r="6" fill="#1878ff"/><path d="M9.7,6.6 V13.2 M6.4,9.9 H13" stroke="#fff" stroke-width="1.2"/></svg>
<svg class="abs" style="left:1250px;top:852px" width="20" height="20" viewBox="0 0 20 20"><circle cx="9.6" cy="9.9" r="7.3" fill="#fbfbfb"/><circle cx="9.6" cy="9.9" r="6" fill="#1878ff"/></svg>
<div class="abs" style="left:1208px;top:167.3px;width:38.5px;height:31.5px;background:#fff;border-radius:1.5px"></div>
<svg class="abs" style="left:1243px;top:192px" width="10" height="10" viewBox="0 0 10 10"><path d="M0,6.8 L3.5,6.8 L7.5,3 L3.5,3 Z" fill="#fff"/></svg>

<div class="abs" style="left:1212px;top:862.5px;width:35px;height:31.7px;background:#fff;border-radius:1.5px"></div>
<svg class="abs" style="left:1245px;top:860px" width="10" height="10" viewBox="0 0 10 10"><path d="M0,2.5 L7,2.5 L2,8 Z" fill="#fff"/></svg>

<div class="abs" style="left:256px;top:967.2px;width:722px;height:13.3px;background:#f8f8f8;border-radius:6.6px"></div>
<div class="abs" style="left:259.2px;top:970.1px;width:713px;height:7.5px;background:#1878ff;border-radius:3.5px"></div>
<svg class="abs" style="left:962px;top:964px" width="20" height="20" viewBox="0 0 20 20"><circle cx="10.4" cy="9.8" r="7.3" fill="#fdfdfd"/><circle cx="10.4" cy="9.8" r="5.8" fill="#1878ff"/></svg>
<div class="abs" style="left:984.4px;top:965.2px;width:35.8px;height:17.5px;background:#fff;border-radius:1.5px"></div>
<svg class="abs" style="left:980px;top:969px" width="6" height="10" viewBox="0 0 6 10"><path d="M1.5,4.8 L5,2.8 L5,6.8 Z" fill="#fff"/></svg>

<svg class="abs" style="left:1225px;top:940px" width="48" height="50" viewBox="1225 940 48 50"><path d="M1251.7,949.3 L1268.3,956.9 L1268.3,974.7 L1251.7,982 L1234.8,974.7 L1234.8,956.9 Z" fill="#fff" stroke="#fff" stroke-width="0.4" stroke-linejoin="round"/><g fill="#0566c0" stroke="#0566c0" stroke-width="0.4" stroke-linejoin="round"><path d="M1251.7,951.5 L1266.8,958.5 L1251.7,965.7 L1237,958.5 Z"/><path d="M1237,965.7 L1241.2,963.3 L1251.7,968 L1262.4,963.3 L1266.8,965.7 L1251.7,972.8 Z"/><path d="M1237,973 L1241.2,970.6 L1251.7,975.3 L1262.4,970.6 L1266.8,973 L1251.7,979.9 Z"/></g></svg>
<div class="abs" style="left:32px;top:885px;width:64px;height:33.5px;background:#c6c6c6"></div>
<div class="abs" style="left:32px;top:918.5px;width:64px;height:56.5px;background:#c5c5c5"></div>


<div class="abs" style="left:31.2px;top:931px;width:2.7px;height:45px;background:#2b84f0"></div>
<div class="abs" style="left:32.5px;top:974.1px;width:63.5px;height:3px;background:#f4435c"></div>


<svg class="abs" style="left:642px;top:739px" width="16" height="22" viewBox="0 0 16 22"><path d="M1.5,1.5 L1.5,16.5 L5.2,13.2 L8,19.5 L10.3,18.5 L7.6,12.3 L12.5,12.3 Z" fill="#fff" stroke="#111" stroke-width="1.1" stroke-linejoin="round"/></svg>
<svg class="abs" id="labels" style="left:0;top:0;pointer-events:none" width="1273" height="994" viewBox="0 0 1273 994" font-family='"Liberation Sans", "DejaVu Sans", sans-serif'>
<text x="34.6" y="20.0" font-size="12.5" fill="#f0f0f0" textLength="17.6" lengthAdjust="spacingAndGlyphs" xml:space="preserve">File</text>
<text x="266.8" y="20.0" font-size="12.5" fill="#6b7074" textLength="56.9" lengthAdjust="spacingAndGlyphs" xml:space="preserve">Calibration</text>
<text x="612.4" y="20.3" font-size="12.5" fill="#f2f2f2" textLength="254.4" lengthAdjust="spacingAndGlyphs" xml:space="preserve">ECC2_0.4_Spool adapter_Elegoo PLA _0.2_1h12m</text>
<text x="95.6" y="54.0" font-size="15" fill="#f2f2f2" textLength="53.2" lengthAdjust="spacing" xml:space="preserve">Prepare</text>
<text x="231.8" y="54.0" font-size="15" fill="#fff" textLength="54.0" lengthAdjust="spacing" xml:space="preserve">Preview</text>
<text x="371.6" y="54.0" font-size="15" fill="#f2f2f2" textLength="45.1" lengthAdjust="spacing" xml:space="preserve">Device</text>
<text x="506.2" y="54.0" font-size="15" fill="#f2f2f2" textLength="48.1" lengthAdjust="spacing" xml:space="preserve">Project</text>
<text x="944.0" y="54.2" font-size="15" fill="#b5b8ba" textLength="71.0" lengthAdjust="spacing" xml:space="preserve">Slice plate</text>
<text x="1094.6" y="54.2" font-size="15" fill="#b5b8ba" textLength="125.0" lengthAdjust="spacing" xml:space="preserve">Export G-code file</text>
<text x="1025.0" y="93.7" font-size="13" fill="#ececec" textLength="50.2" lengthAdjust="spacing" xml:space="preserve">Filament</text>
<text x="946.5" y="124.2" font-size="13" fill="#fafafa" font-weight="bold" textLength="52.4" lengthAdjust="spacing" xml:space="preserve">Filament</text>
<text x="1012.5" y="124.2" font-size="13" fill="#fafafa" font-weight="bold" textLength="36.9" lengthAdjust="spacing" xml:space="preserve">Model</text>
<text x="1064.6" y="124.2" font-size="13" fill="#fafafa" font-weight="bold" textLength="46.2" lengthAdjust="spacingAndGlyphs" xml:space="preserve">Flushed</text>
<text x="1122.5" y="124.2" font-size="13" fill="#fafafa" font-weight="bold" textLength="30.8" lengthAdjust="spacing" xml:space="preserve">Total</text>
<text x="965.2" y="147.0" font-size="13" fill="#ececec" xml:space="preserve">1</text>
<text x="1012.5" y="147.0" font-size="13" fill="#ececec" textLength="45.5" lengthAdjust="spacing" xml:space="preserve">13.49 m</text>
<text x="1012.5" y="162.2" font-size="13" fill="#ececec" textLength="42.5" lengthAdjust="spacing" xml:space="preserve">40.57 g</text>
<text x="1064.6" y="147.0" font-size="13" fill="#ececec" textLength="38.1" lengthAdjust="spacingAndGlyphs" xml:space="preserve">0.16 m</text>
<text x="1064.6" y="162.2" font-size="13" fill="#ececec" textLength="34.8" lengthAdjust="spacingAndGlyphs" xml:space="preserve">0.47 g</text>
<text x="1122.5" y="147.0" font-size="13" fill="#ececec" textLength="45.5" lengthAdjust="spacing" xml:space="preserve">13.65 m</text>
<text x="1122.5" y="162.2" font-size="13" fill="#ececec" textLength="42.2" lengthAdjust="spacing" xml:space="preserve">41.04 g</text>
<text x="946.5" y="183.3" font-size="13" fill="#ececec" textLength="134.2" lengthAdjust="spacing" xml:space="preserve">Filament change times:</text>
<text x="1090.6" y="183.3" font-size="13" fill="#ececec" xml:space="preserve">0</text>
<text x="946.5" y="202.2" font-size="13" fill="#ececec" textLength="28.6" lengthAdjust="spacingAndGlyphs" xml:space="preserve">Cost:</text>
<text x="984.3" y="202.2" font-size="13" fill="#ececec" textLength="23.8" lengthAdjust="spacingAndGlyphs" xml:space="preserve">0.00</text>
<text x="946.3" y="230.1" font-size="13" fill="#fafafa" font-weight="bold" textLength="97.4" lengthAdjust="spacing" xml:space="preserve">Time Estimation</text>
<text x="946.3" y="253.3" font-size="13" fill="#ececec" textLength="77.5" lengthAdjust="spacing" xml:space="preserve">Prepare time:</text>
<text x="1070.6" y="253.3" font-size="13" fill="#ececec" textLength="12.6" lengthAdjust="spacingAndGlyphs" xml:space="preserve">4s</text>
<text x="946.3" y="271.8" font-size="13" fill="#ececec" textLength="117.2" lengthAdjust="spacing" xml:space="preserve">Model printing time:</text>
<text x="1070.6" y="271.8" font-size="13" fill="#ececec" textLength="38.7" lengthAdjust="spacing" xml:space="preserve">1h12m</text>
<text x="946.3" y="290.9" font-size="13" fill="#ececec" textLength="61.0" lengthAdjust="spacing" xml:space="preserve">Total time:</text>
<text x="1070.6" y="290.9" font-size="13" fill="#ececec" textLength="38.7" lengthAdjust="spacing" xml:space="preserve">1h12m</text>
<text x="946.3" y="314.1" font-size="13" fill="#fafafa" font-weight="bold" textLength="47.8" lengthAdjust="spacing" xml:space="preserve">Options</text>
<text x="964.4" y="337.2" font-size="13" fill="#ececec" textLength="35.0" lengthAdjust="spacing" xml:space="preserve">Travel</text>
<text x="964.4" y="358.1" font-size="13" fill="#ececec" textLength="41.9" lengthAdjust="spacing" xml:space="preserve">Retract</text>
<text x="964.4" y="379.1" font-size="13" fill="#ececec" textLength="55.3" lengthAdjust="spacing" xml:space="preserve">Unretract</text>
<text x="964.4" y="400.0" font-size="13" fill="#ececec" textLength="29.4" lengthAdjust="spacing" xml:space="preserve">Wipe</text>
<text x="964.4" y="421.0" font-size="13" fill="#ececec" textLength="37.6" lengthAdjust="spacingAndGlyphs" xml:space="preserve">Seams</text>
<text x="813.6" y="466.0" font-size="12.5" fill="#e98a4e" textLength="42.9" lengthAdjust="spacing" xml:space="preserve">472342</text>
<text x="865.6" y="466.0" font-size="12.5" fill="#d5c925" textLength="13.9" lengthAdjust="spacingAndGlyphs" xml:space="preserve">G1</text>
<text x="885.7" y="466.0" font-size="12.5" fill="#ededed" textLength="148.5" lengthAdjust="spacing" xml:space="preserve">X152.722 Y149.018 Z60.4</text>
<text x="813.6" y="484.9" font-size="12.5" fill="#e98a4e" textLength="42.9" lengthAdjust="spacing" xml:space="preserve">472343</text>
<text x="865.6" y="484.9" font-size="12.5" fill="#d5c925" textLength="13.9" lengthAdjust="spacingAndGlyphs" xml:space="preserve">G1</text>
<text x="885.7" y="484.9" font-size="12.5" fill="#ededed" textLength="148.5" lengthAdjust="spacing" xml:space="preserve">X128.004 Y163.927 Z60.4</text>
<text x="813.6" y="503.9" font-size="12.5" fill="#e98a4e" textLength="42.9" lengthAdjust="spacing" xml:space="preserve">472344</text>
<text x="865.6" y="503.9" font-size="12.5" fill="#d5c925" textLength="13.9" lengthAdjust="spacingAndGlyphs" xml:space="preserve">G1</text>
<text x="885.7" y="503.9" font-size="12.5" fill="#ededed" textLength="21.4" lengthAdjust="spacing" xml:space="preserve">Z60</text>
<text x="813.6" y="522.9" font-size="12.5" fill="#e98a4e" textLength="42.9" lengthAdjust="spacing" xml:space="preserve">472345</text>
<text x="865.6" y="522.9" font-size="12.5" fill="#d5c925" textLength="13.9" lengthAdjust="spacingAndGlyphs" xml:space="preserve">G1</text>
<text x="885.7" y="522.9" font-size="12.5" fill="#ededed" textLength="57.2" lengthAdjust="spacing" xml:space="preserve">E.8 F1800</text>
<text x="813.6" y="541.8" font-size="12.5" fill="#e98a4e" textLength="42.9" lengthAdjust="spacing" xml:space="preserve">472346</text>
<text x="865.6" y="541.8" font-size="12.5" fill="#a9a9a9" textLength="101.7" lengthAdjust="spacing" xml:space="preserve">;WIDTH:0.424988</text>
<text x="813.6" y="560.8" font-size="12.5" fill="#e98a4e" textLength="42.9" lengthAdjust="spacing" xml:space="preserve">472347</text>
<text x="865.6" y="560.8" font-size="12.5" fill="#d5c925" textLength="13.9" lengthAdjust="spacingAndGlyphs" xml:space="preserve">G1</text>
<text x="885.7" y="560.8" font-size="12.5" fill="#ededed" textLength="43.3" lengthAdjust="spacing" xml:space="preserve">F12000</text>
<text x="813.6" y="579.7" font-size="12.5" fill="#e98a4e" textLength="42.9" lengthAdjust="spacing" xml:space="preserve">472348</text>
<text x="865.6" y="579.7" font-size="12.5" fill="#d5c925" textLength="13.9" lengthAdjust="spacingAndGlyphs" xml:space="preserve">G1</text>
<text x="885.7" y="579.7" font-size="12.5" fill="#ededed" textLength="148.7" lengthAdjust="spacing" xml:space="preserve">X128.6 Y163.332 E.02544</text>
<text x="813.6" y="598.7" font-size="12.5" fill="#e98a4e" textLength="42.9" lengthAdjust="spacing" xml:space="preserve">472349</text>
<text x="865.6" y="598.7" font-size="12.5" fill="#d5c925" textLength="13.9" lengthAdjust="spacingAndGlyphs" xml:space="preserve">G1</text>
<text x="885.7" y="598.7" font-size="12.5" fill="#ededed" textLength="159.7" lengthAdjust="spacing" xml:space="preserve">X128.462 Y162.929 F30000</text>
<text x="813.6" y="617.7" font-size="12.5" fill="#e98a4e" textLength="42.9" lengthAdjust="spacing" xml:space="preserve">472350</text>
<text x="865.6" y="617.7" font-size="12.5" fill="#d5c925" textLength="13.9" lengthAdjust="spacingAndGlyphs" xml:space="preserve">G1</text>
<text x="885.7" y="617.7" font-size="12.5" fill="#ededed" textLength="43.3" lengthAdjust="spacing" xml:space="preserve">F12000</text>
<text x="813.6" y="636.6" font-size="12.5" fill="#e98a4e" textLength="42.9" lengthAdjust="spacing" xml:space="preserve">472351</text>
<text x="865.6" y="636.6" font-size="12.5" fill="#d5c925" textLength="13.9" lengthAdjust="spacingAndGlyphs" xml:space="preserve">G1</text>
<text x="885.7" y="636.6" font-size="12.5" fill="#ededed" textLength="156.3" lengthAdjust="spacing" xml:space="preserve">X127.611 Y163.78 E.03634</text>
<text x="813.6" y="655.6" font-size="12.5" fill="#e98a4e" textLength="42.9" lengthAdjust="spacing" xml:space="preserve">472352</text>
<text x="865.6" y="655.6" font-size="12.5" fill="#d5c925" textLength="13.9" lengthAdjust="spacingAndGlyphs" xml:space="preserve">G1</text>
<text x="885.7" y="655.6" font-size="12.5" fill="#ededed" textLength="152.6" lengthAdjust="spacing" xml:space="preserve">X127.41 Y163.441 F30000</text>
<text x="813.6" y="674.5" font-size="12.5" fill="#e98a4e" textLength="42.9" lengthAdjust="spacing" xml:space="preserve">472353</text>
<text x="865.6" y="674.5" font-size="12.5" fill="#d5c925" textLength="13.9" lengthAdjust="spacingAndGlyphs" xml:space="preserve">G1</text>
<text x="885.7" y="674.5" font-size="12.5" fill="#ededed" textLength="43.3" lengthAdjust="spacing" xml:space="preserve">F12000</text>
<text x="813.6" y="693.5" font-size="12.5" fill="#e98a4e" textLength="42.9" lengthAdjust="spacing" xml:space="preserve">472354</text>
<text x="865.6" y="693.5" font-size="12.5" fill="#d5c925" textLength="13.9" lengthAdjust="spacingAndGlyphs" xml:space="preserve">G1</text>
<text x="885.7" y="693.5" font-size="12.5" fill="#ededed" textLength="163.4" lengthAdjust="spacing" xml:space="preserve">X128.319 Y162.532 E.03884</text>
<text x="813.6" y="712.5" font-size="12.5" fill="#e98a4e" textLength="42.9" lengthAdjust="spacing" xml:space="preserve">472355</text>
<text x="865.6" y="712.5" font-size="12.5" fill="#d5c925" textLength="13.9" lengthAdjust="spacingAndGlyphs" xml:space="preserve">G1</text>
<text x="885.7" y="712.5" font-size="12.5" fill="#ededed" textLength="78.2" lengthAdjust="spacing" xml:space="preserve">E-.728 F1800</text>
<text x="813.6" y="731.4" font-size="12.5" fill="#e98a4e" textLength="42.9" lengthAdjust="spacing" xml:space="preserve">472356</text>
<text x="865.6" y="731.4" font-size="12.5" fill="#a9a9a9" textLength="76.8" lengthAdjust="spacingAndGlyphs" xml:space="preserve">;WIPE_START</text>
<text x="813.6" y="750.4" font-size="12.5" fill="#e98a4e" textLength="42.9" lengthAdjust="spacing" xml:space="preserve">472357</text>
<text x="865.6" y="750.4" font-size="12.5" fill="#d5c925" textLength="13.9" lengthAdjust="spacingAndGlyphs" xml:space="preserve">G1</text>
<text x="885.7" y="750.4" font-size="12.5" fill="#ededed" textLength="43.3" lengthAdjust="spacing" xml:space="preserve">F30000</text>
<text x="813.6" y="769.3" font-size="12.5" fill="#e98a4e" textLength="42.9" lengthAdjust="spacing" xml:space="preserve">472358</text>
<text x="865.6" y="769.3" font-size="12.5" fill="#d5c925" textLength="13.9" lengthAdjust="spacingAndGlyphs" xml:space="preserve">G1</text>
<text x="885.7" y="769.3" font-size="12.5" fill="#ededed" textLength="147.5" lengthAdjust="spacing" xml:space="preserve">X127.471 Y163.38 E-.072</text>
<text x="813.6" y="788.3" font-size="12.5" fill="#e98a4e" textLength="42.9" lengthAdjust="spacing" xml:space="preserve">472359</text>
<text x="865.6" y="788.3" font-size="12.5" fill="#a9a9a9" textLength="64.5" lengthAdjust="spacingAndGlyphs" xml:space="preserve">;WIPE_END</text>
<text x="813.6" y="807.3" font-size="12.5" fill="#e98a4e" textLength="42.9" lengthAdjust="spacing" xml:space="preserve">472360</text>
<text x="865.6" y="807.3" font-size="12.5" fill="#d5c925" textLength="31.9" lengthAdjust="spacing" xml:space="preserve">M106</text>
<text x="902.0" y="807.3" font-size="12.5" fill="#ededed" textLength="13.9" lengthAdjust="spacingAndGlyphs" xml:space="preserve">S0</text>
<text x="813.6" y="826.2" font-size="12.5" fill="#e98a4e" textLength="42.9" lengthAdjust="spacing" xml:space="preserve">472361</text>
<text x="865.6" y="826.2" font-size="12.5" fill="#d5c925" textLength="31.9" lengthAdjust="spacing" xml:space="preserve">M106</text>
<text x="902.0" y="826.2" font-size="12.5" fill="#ededed" textLength="32.1" lengthAdjust="spacingAndGlyphs" xml:space="preserve">P2 S0</text>
<text x="813.6" y="845.2" font-size="12.5" fill="#e98a4e" textLength="42.9" lengthAdjust="spacing" xml:space="preserve">472362</text>
<text x="865.6" y="845.2" font-size="12.5" fill="#a9a9a9" textLength="80.7" lengthAdjust="spacing" xml:space="preserve">;TYPE:Custom</text>
<text x="813.6" y="864.1" font-size="12.5" fill="#e98a4e" textLength="42.9" lengthAdjust="spacing" xml:space="preserve">472363</text>
<text x="865.6" y="864.1" font-size="12.5" fill="#a9a9a9" textLength="119.1" lengthAdjust="spacing" xml:space="preserve">; filament end gcode</text>
<text x="813.6" y="883.1" font-size="12.5" fill="#e98a4e" textLength="42.9" lengthAdjust="spacing" xml:space="preserve">472364</text>
<text x="865.6" y="883.1" font-size="12.5" fill="#a9a9a9" textLength="38.4" lengthAdjust="spacingAndGlyphs" xml:space="preserve">;=====</text>
<text x="908.7" y="883.1" font-size="12.5" fill="#a9a9a9" textLength="129.1" lengthAdjust="spacingAndGlyphs" xml:space="preserve">CC&amp;CC2_END_GCODE</text>
<text x="1042.6" y="883.1" font-size="12.5" fill="#a9a9a9" textLength="115.8" lengthAdjust="spacing" xml:space="preserve">================</text>
<text x="813.6" y="902.1" font-size="12.5" fill="#e98a4e" textLength="42.9" lengthAdjust="spacing" xml:space="preserve">472365</text>
<text x="865.6" y="902.1" font-size="12.5" fill="#a9a9a9" textLength="38.4" lengthAdjust="spacingAndGlyphs" xml:space="preserve">;=====</text>
<text x="908.7" y="902.1" font-size="12.5" fill="#a9a9a9" textLength="130.1" lengthAdjust="spacing" xml:space="preserve">date: 2025-10-16-001</text>
<text x="1044.5" y="902.1" font-size="12.5" fill="#a9a9a9" textLength="152.1" lengthAdjust="spacing" xml:space="preserve">=====================</text>
<text x="1218.6" y="180.4" font-size="12.5" fill="#1f81c4" textLength="19.9" lengthAdjust="spacingAndGlyphs" xml:space="preserve">300</text>
<text x="1211.6" y="195.0" font-size="12.5" fill="#1f81c4" textLength="30.9" lengthAdjust="spacing" xml:space="preserve">60.00</text>
<text x="1229.2" y="875.0" font-size="12.5" fill="#1f81c4" xml:space="preserve">1</text>
<text x="1219.0" y="890.1" font-size="12.5" fill="#1f81c4" textLength="23.7" lengthAdjust="spacing" xml:space="preserve">0.20</text>
<text x="988.1" y="977.5" font-size="12.5" fill="#1f81c4" textLength="27.7" lengthAdjust="spacing" xml:space="preserve">1853</text>
<text x="53.2" y="910.5" font-size="9" fill="#505050" textLength="21.4" lengthAdjust="spacingAndGlyphs" font-family="DejaVu Sans, sans-serif" stroke="#505050" stroke-width="0.25" xml:space="preserve">Top</text>
<text x="48.6" y="955.6" font-size="9" fill="#505050" textLength="31.2" lengthAdjust="spacingAndGlyphs" font-family="DejaVu Sans, sans-serif" stroke="#505050" stroke-width="0.25" xml:space="preserve">Front</text>
<text x="28.1" y="925.0" font-size="13" fill="#3a8fe8" xml:space="preserve">Z</text>
<text x="104.0" y="978.9" font-size="13.5" fill="#f4435c" xml:space="preserve">X</text>
</svg>
</div></body></html>
